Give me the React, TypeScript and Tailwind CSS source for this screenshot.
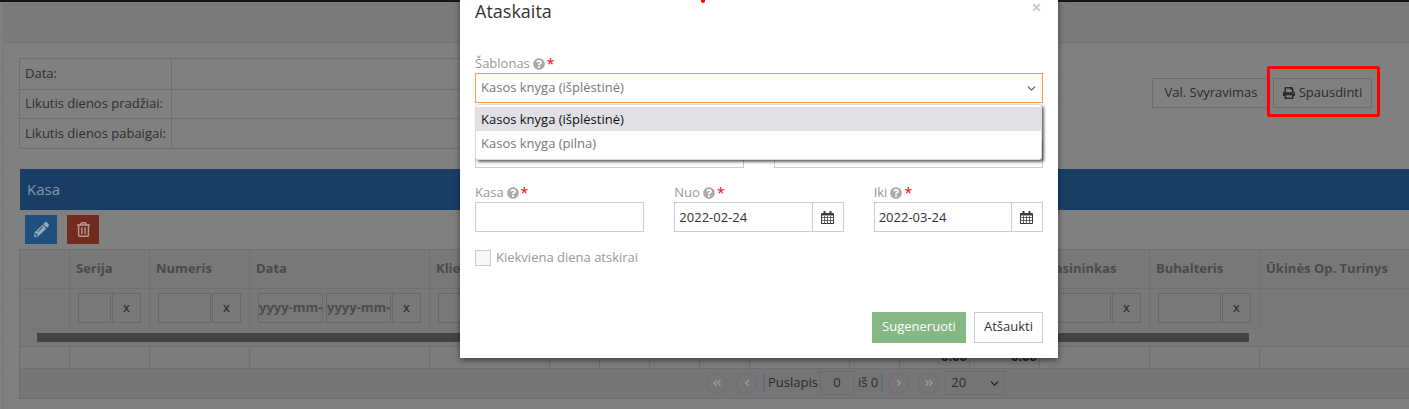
import React from 'react'
import {
  FaAngleDoubleLeft,
  FaAngleDoubleRight,
  FaAngleLeft,
  FaAngleRight,
  FaPencilAlt,
  FaPrint,
  FaQuestionCircle,
  FaRegTrashAlt,
  FaTimes,
} from 'react-icons/fa'
import { ChevronDownIcon } from 'lucide-react'

const COLS =
  'grid grid-cols-[50px_80px_100px_180px_120px_50px_50px_50px_50px_100px_50px_70px_70px_110px_110px_150px]'

const headers = [
  '',
  'Serija',
  'Numeris',
  'Data',
  'Klientas',
  '',
  '',
  '',
  '',
  '',
  '',
  '',
  '',
  'Kasininkas',
  'Buhalteris',
  'Ūkinės Op. Turinys',
]

const footers: Record<number, string> = { 11: '0.00', 12: '0.00' }

const ticks = Array.from({ length: 11 }, (_, i) => i)

const CalendarIcon = () => (
  <svg width="13" height="13" viewBox="0 0 13 13" fill="none" stroke="#3a3a3a" strokeWidth="1">
    <path d="M.5 2.5h12v10H.5z" />
    <path d="M.5 3.5h12" strokeWidth="2" />
    <path d="M.5 6.5h12M.5 9.5h12M3.5 5v8M6.5 5v8M9.5 5v8" strokeOpacity="0.75" />
    <path d="M3.5 0v3M9.5 0v3" strokeWidth="2" />
  </svg>
)

const FilterInput = ({ width }: { width: string }) => (
  <div className={`h-[30px] border border-[#686868] ${width}`} />
)

const ClearButton = () => (
  <div className="flex h-[30px] w-[29px] items-center justify-center border border-[#686868] text-[13px] text-[#222]">
    x
  </div>
)

const DateFilter = () => (
  <div className="h-[30px] w-[65px] overflow-hidden border border-[#686868] text-[13px] font-bold leading-[26px] whitespace-nowrap text-[#4c4c4c]">
    yyyy-mm-
  </div>
)

const filterCell = (i: number) => {
  if (i === 1)
    return (
      <div className="flex gap-[1px] pl-[8px]">
        <FilterInput width="w-[33px]" />
        <ClearButton />
      </div>
    )
  if (i === 2)
    return (
      <div className="flex gap-[1px] pl-[8px]">
        <FilterInput width="w-[53px]" />
        <ClearButton />
      </div>
    )
  if (i === 3)
    return (
      <div className="flex gap-[3px] pl-[8px]">
        <DateFilter />
        <DateFilter />
        <div className="-ml-[2px]">
          <ClearButton />
        </div>
      </div>
    )
  if (i === 4 || i === 13 || i === 14)
    return (
      <div className="flex gap-[1px] pl-[8px]">
        <FilterInput width="w-[63px]" />
        <ClearButton />
      </div>
    )
  return null
}

const Label = ({ text }: { text: string }) => (
  <div className="flex h-[17px] items-center gap-[3px] text-[13px] text-[#999]">
    <span>{text}</span>
    <FaQuestionCircle className="h-[12px] w-[12px] text-[#aaa]" />
    <span className="-ml-[1px] text-[14px] text-[#f00]">*</span>
  </div>
)

const DateField = ({ label, value }: { label: string; value: string }) => (
  <div>
    <Label text={label} />
    <div className="mt-[1px] flex h-[30px] border border-[#ccc]">
      <div className="flex-1 pl-[4px] text-[13px] leading-[28px] text-[#333]">
        {value}
      </div>
      <div className="flex w-[31px] items-center justify-center border-l border-[#ccc]">
        <CalendarIcon />
      </div>
    </div>
  </div>
)

const PagerButton = ({ children }: { children: React.ReactNode }) => (
  <div className="flex h-[21px] w-[21px] items-center justify-center rounded-full border border-[#6c6c6c] text-[#999]">
    {children}
  </div>
)

const ReportModal = () => (
  <div className="absolute top-0 left-[460px] flex h-[358px] w-[598px] flex-col bg-white px-[15px] shadow-[0_2px_6px_rgba(0,0,0,0.5)]">
    <div className="absolute top-0 left-[241px] h-[3px] w-[4px] rounded-b-full bg-[#f00]" />
    <FaTimes className="absolute top-[2px] right-[16px] h-[11px] w-[11px] text-[#ccc]" />
    <h4 className="h-[23px] text-[18px] leading-[23px] text-[#333]">Ataskaita</h4>

    <div className="mt-[32px]">
      <Label text="Šablonas" />
    </div>
    <div className="mt-[1px] flex h-[30px] items-center justify-between border border-[#f0a04b] pr-[4px] pl-[5px] text-[13px] text-[#777]">
      <span>Kasos knyga (išplėstinė)</span>
      <ChevronDownIcon size={13} strokeWidth={2.5} className="text-[#666]" />
    </div>

    <div className="absolute top-[104px] left-[15px] z-10 h-[56px] w-[567px] rounded-[3px] border border-[#ddd] bg-white py-[3px] text-[13px] shadow-[2px_2px_3px_rgba(0,0,0,0.6)]">
      <div className="-mt-[1px] h-[24px] bg-[#e0e0e5] pl-[5px] leading-[24px] text-[#111]">
        Kasos knyga (išplėstinė)
      </div>
      <div className="h-[24px] pl-[5px] leading-[24px] text-[#777]">
        Kasos knyga (pilna)
      </div>
    </div>

    <div className="mt-[35px] grid grid-cols-2 gap-[30px]">
      <div className="h-[30px] border border-[#ccc]" />
      <div className="h-[30px] border border-[#ccc]" />
    </div>

    <div className="mt-[16px] grid grid-cols-3 gap-[30px]">
      <div>
        <Label text="Kasa" />
        <div className="mt-[1px] h-[30px] border border-[#ccc]" />
      </div>
      <DateField label="Nuo" value="2022-02-24" />
      <DateField label="Iki" value="2022-03-24" />
    </div>

    <div className="mt-[16px] flex items-center gap-[5px]">
      <div className="h-[16px] w-[16px] border border-[#ccc] bg-[#f7f7f7]" />
      <span className="text-[13px] text-[#999]">Kiekviena diena atskirai</span>
    </div>

    <div className="mt-[44px] flex justify-end gap-[8px] text-[13px]">
      <div className="flex h-[31px] w-[94px] items-center justify-center bg-[#86b883] text-white">
        Sugeneruoti
      </div>
      <div className="flex h-[31px] w-[69px] items-center justify-center border border-[#ccc] text-[#333]">
        Atšaukti
      </div>
    </div>
  </div>
)

export default function App() {
  return (
    <div className="relative flex h-[409px] w-[1409px] flex-col overflow-hidden bg-[#808080] font-['Open_Sans',sans-serif] text-[13px] text-[#2b2b2b]">
      <div className="h-[2px] bg-[#151515]" />
      <div className="flex flex-1">
        <div className="w-[4px] shrink-0 border-r border-[#757575]">
          {ticks.map((t) => (
            <div key={t} className="h-[34px] border-b border-[#767676]" />
          ))}
        </div>

        <div className="min-w-0 flex-1">
          <div className="h-[41px] border-b border-[#747474] bg-[#7a7a7a]" />

          <div className="flex items-start justify-between pt-[15px] pl-[15px] pr-[37px]">
            <div className="w-[680px] border border-[#6e6e6e] text-[#2f2f2f]">
              {['Data:', 'Likutis dienos pradžiai:', 'Likutis dienos pabaigai:'].map(
                (row, i) => (
                  <div
                    key={row}
                    className={`flex h-[29.5px] items-center ${i > 0 ? 'border-t border-[#6e6e6e]' : ''}`}
                  >
                    <div className="flex h-full w-[152px] items-center border-r border-[#6e6e6e] pl-[5px]">
                      {row}
                    </div>
                  </div>
                )
              )}
            </div>

            <div className="mt-[20px] flex gap-[5px]">
              <div className="flex h-[30px] w-[116px] items-center justify-center border border-[#6c6c6c] pl-[2px]">
                Val. Svyravimas
              </div>
              <div className="relative flex h-[30px] w-[99px] items-center justify-center gap-[4px] border border-[#6c6c6c]">
                <FaPrint className="h-[12px] w-[12px]" />
                Spausdinti
                <div className="absolute top-[-13px] right-[-9px] bottom-[-10px] left-[-7px] rounded-[2px] border-[3px] border-[#f00]" />
              </div>
            </div>
          </div>

          <div className="mt-[20px] pl-[15px]">
            <div className="ml-[1px] flex h-[41px] items-center bg-[#183e66] pl-[7px] text-[15px] text-[#8497ab]">
              Kasa
            </div>

            <div className="flex h-[39px] gap-[10px] pt-[5px] pl-[6px]">
              <div className="flex h-[29px] w-[32px] items-center justify-center bg-[#1e4f7f] text-[#9aa9b8]">
                <FaPencilAlt className="h-[15px] w-[15px]" />
              </div>
              <div className="flex h-[29px] w-[32px] items-center justify-center bg-[#732b20] text-[#b89a94]">
                <FaRegTrashAlt className="h-[15px] w-[15px]" />
              </div>
            </div>

            <div className="border-b border-l border-[#6c6c6c] bg-[#787878]">
              <div className={`${COLS} h-[40px] border-t border-b border-[#707070]`}>
                {headers.map((h, i) => (
                  <div
                    key={i}
                    className="flex items-center border-r border-[#707070] pl-[6px] font-bold whitespace-nowrap text-[#4a4a4a]"
                  >
                    {h}
                  </div>
                ))}
              </div>

              <div className={`${COLS} h-[40px] border-b border-[#747474] pt-[4px]`}>
                {headers.map((_, i) => (
                  <div key={i} className="-mt-[4px] flex items-center border-r border-[#707070]">
                    {filterCell(i)}
                  </div>
                ))}
              </div>

              <div className="flex h-[18px] items-center border-b border-[#6e6e6e] pl-[17px]">
                <div className="h-[9px] w-[1212px] bg-[#444]" />
              </div>

              <div className={`${COLS} h-[22px] border-b border-[#6e6e6e] bg-[#7c7c7c]`}>
                {headers.map((_, i) => (
                  <div
                    key={i}
                    className="flex items-center justify-end border-r border-[#6e6e6e] pr-[2px] font-bold text-[#222]"
                  >
                    {footers[i]}
                  </div>
                ))}
              </div>

              <div className="flex h-[29px] items-center gap-[9px] bg-[#757575] pl-[686px]">
                <PagerButton>
                  <FaAngleDoubleLeft className="h-[10px] w-[10px]" />
                </PagerButton>
                <PagerButton>
                  <FaAngleLeft className="h-[10px] w-[10px]" />
                </PagerButton>
                <div className="-ml-[3px] flex items-center gap-[3px]">
                  <div className="h-[18px] w-[2px] bg-[#5e6b78]" />
                  <span>Puslapis</span>
                  <div className="-ml-[1px] flex h-[24px] w-[34px] items-center justify-center border border-[#6c6c6c]">
                    0
                  </div>
                  <span className="ml-[1px]">iš 0</span>
                  <div className="h-[18px] w-[2px] bg-[#5e6b78]" />
                </div>
                <div className="-ml-[4px] flex gap-[9px]">
                  <PagerButton>
                    <FaAngleRight className="h-[10px] w-[10px]" />
                  </PagerButton>
                  <PagerButton>
                    <FaAngleDoubleRight className="h-[10px] w-[10px]" />
                  </PagerButton>
                </div>
                <div className="-ml-[3px] flex h-[24px] w-[60px] items-center justify-between border border-[#6c6c6c] pr-[3px] pl-[5px]">
                  20
                  <ChevronDownIcon size={13} strokeWidth={2.5} className="text-[#222]" />
                </div>
              </div>
            </div>
          </div>
        </div>
      </div>

      <ReportModal />
    </div>
  )
}
